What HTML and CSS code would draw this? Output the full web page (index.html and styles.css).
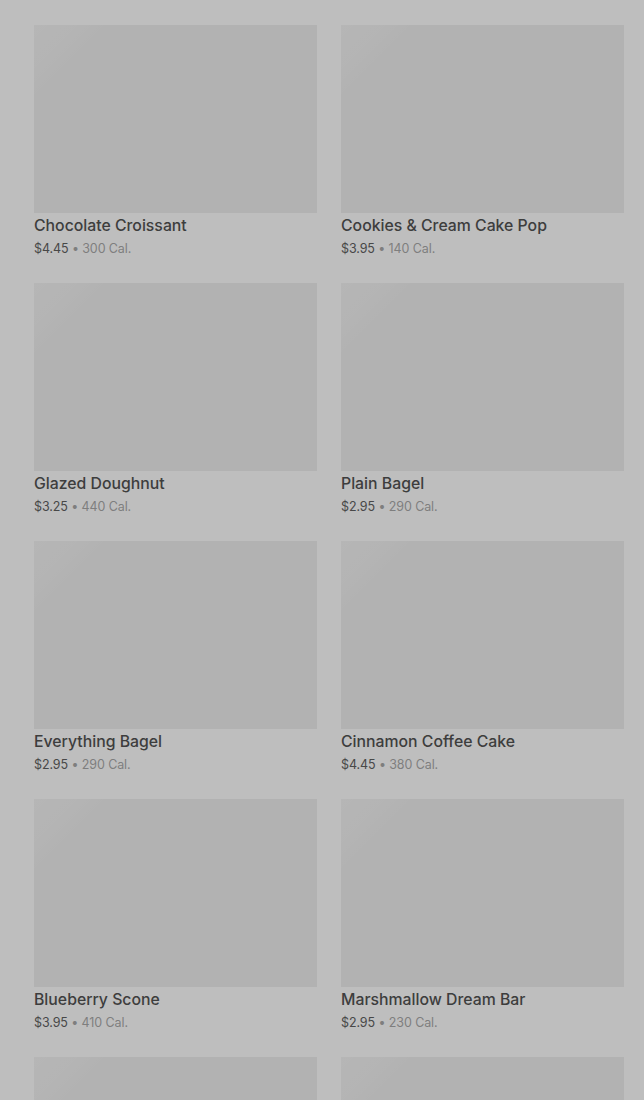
FILE: index.html
```html
<!DOCTYPE html>
<html>
<head>
<meta charset="utf-8">
<link rel="stylesheet" href="styles.css">
</head>
<body>
<div class="page">
  <div class="grid">
    <div class="card"><div class="img"></div><div class="name">Butter Croissant</div><div class="meta"><span class="price">$3.75</span> <span class="cal">• 260 Cal.</span></div></div>
    <div class="card"><div class="img"></div><div class="name">Banana Nut Bread</div><div class="meta"><span class="price">$3.95</span> <span class="cal">• 420 Cal.</span></div></div>
    <div class="card"><div class="img"></div><div class="name">Chocolate Croissant</div><div class="meta"><span class="price">$4.45</span> <span class="cal">• 300 Cal.</span></div></div>
    <div class="card"><div class="img"></div><div class="name">Cookies &amp; Cream Cake Pop</div><div class="meta"><span class="price">$3.95</span> <span class="cal">• 140 Cal.</span></div></div>
    <div class="card"><div class="img"></div><div class="name">Glazed Doughnut</div><div class="meta"><span class="price">$3.25</span> <span class="cal">• 440 Cal.</span></div></div>
    <div class="card"><div class="img"></div><div class="name">Plain Bagel</div><div class="meta"><span class="price">$2.95</span> <span class="cal">• 290 Cal.</span></div></div>
    <div class="card"><div class="img"></div><div class="name">Everything Bagel</div><div class="meta"><span class="price">$2.95</span> <span class="cal">• 290 Cal.</span></div></div>
    <div class="card"><div class="img"></div><div class="name">Cinnamon Coffee Cake</div><div class="meta"><span class="price">$4.45</span> <span class="cal">• 380 Cal.</span></div></div>
    <div class="card"><div class="img"></div><div class="name">Blueberry Scone</div><div class="meta"><span class="price">$3.95</span> <span class="cal">• 410 Cal.</span></div></div>
    <div class="card"><div class="img"></div><div class="name">Marshmallow Dream Bar</div><div class="meta"><span class="price">$2.95</span> <span class="cal">• 230 Cal.</span></div></div>
    <div class="card"><div class="img"></div><div class="name">Lemon Loaf</div><div class="meta"><span class="price">$3.75</span> <span class="cal">• 470 Cal.</span></div></div>
    <div class="card"><div class="img"></div><div class="name">Cheese Danish</div><div class="meta"><span class="price">$3.45</span> <span class="cal">• 290 Cal.</span></div></div>
  </div>
</div>
</body>
</html>
```
FILE: styles.css
```css
html, body {
  margin: 0;
  padding: 0;
  background: #bebebe;
  overflow: hidden;
}
.page {
  height: 1100px;
  overflow: hidden;
}
.grid {
  display: grid;
  grid-template-columns: 283px 283px;
  column-gap: 24px;
  row-gap: 23px;
  padding: 0 20px 0 34px;
  margin-top: -233px;
}
.card {
  display: flex;
  flex-direction: column;
}
.img {
  height: 188px;
  background-color: #b2b2b2;
  background-image: linear-gradient(135deg, rgba(255,255,255,0.05) 0%, rgba(255,255,255,0.03) 10%, rgba(255,255,255,0) 16%);
}
.name {
  font-family: Inter, "Liberation Sans", sans-serif;
  font-size: 15.8px;
  font-weight: 500;
  line-height: 24px;
  padding-top: 1px;
  color: #3d3d3d;
}
.meta {
  font-family: Inter, "Liberation Sans", sans-serif;
  font-size: 12.5px;
  line-height: 22px;
  letter-spacing: -0.1px;
}
.price {
  color: #484848;
}
.cal {
  color: #7e7e7e;
}
```
